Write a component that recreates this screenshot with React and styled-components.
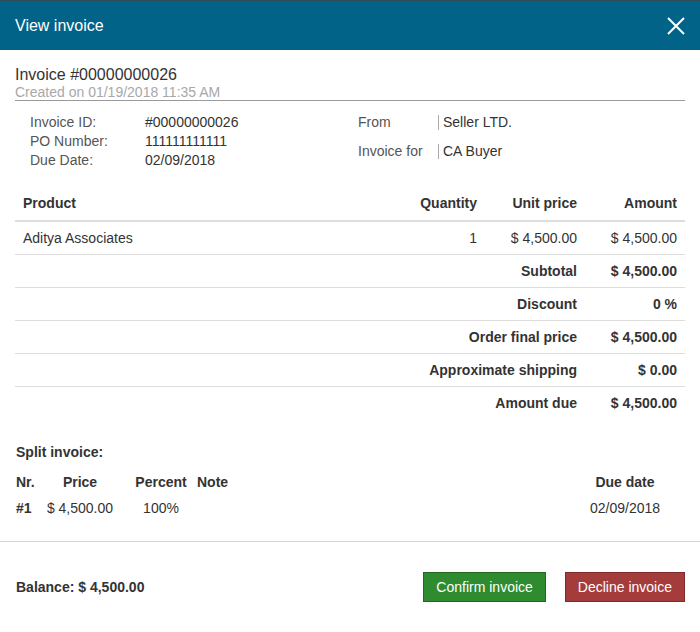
import React from "react";
import styled, { createGlobalStyle } from "styled-components";

const Global = createGlobalStyle`
  html, body { margin: 0; padding: 0; background: #fff; }
  body { font-family: "Liberation Sans", Arial, sans-serif; color: #333; }
  * { box-sizing: border-box; }
`;

const Modal = styled.div`
  width: 700px;
  height: 632px;
  background: #fff;
  display: flex;
  flex-direction: column;
  overflow: hidden;
`;

const Header = styled.div`
  height: 50px;
  flex: none;
  background: #016388;
  border-top: 1px solid #2f4b57;
  display: flex;
  align-items: center;
  justify-content: space-between;
  padding: 0 15px;
`;

const Title = styled.h1`
  margin: 0;
  font-size: 16px;
  font-weight: normal;
  color: #fff;
  line-height: 20px;
`;

const CloseButton = styled.button`
  border: 0;
  background: none;
  padding: 0;
  width: 18px;
  height: 18px;
  display: flex;
  cursor: pointer;
`;

const Body = styled.div`
  padding: 15px 15px 0 15px;
`;

const InvoiceHead = styled.div`
  border-bottom: 1px solid #9a9a9a;
  padding-bottom: 1px;
`;

const InvoiceNumber = styled.div`
  font-size: 16px;
  line-height: 20px;
  color: #333;
`;

const Created = styled.div`
  font-size: 14px;
  line-height: 14px;
  color: #a8a8a8;
`;

const Details = styled.div`
  display: flex;
  padding: 12px 0 0 15px;
`;

const DetailCol = styled.div`
  width: ${(p) => p.$w}px;
  display: flex;
  flex-direction: column;
  gap: ${(p) => p.$gap || 0}px;
`;

const DetailRow = styled.div`
  display: flex;
  font-size: 14px;
  line-height: 19px;
`;

const Label = styled.span`
  width: ${(p) => p.$w}px;
  color: #555;
  flex: none;
`;

const Value = styled.span`
  color: #333;
  ${(p) =>
    p.$bar &&
    `
    padding-left: 5px;
    position: relative;
    &::before {
      content: "";
      position: absolute;
      left: 0;
      top: 2px;
      height: 15px;
      border-left: 1px solid #aaa;
    }
  `}
`;

const Table = styled.div`
  margin-top: 17px;
  display: grid;
  grid-template-columns: 1fr 85px 100px 100px;
  font-size: 14px;
`;

const HeadCell = styled.div`
  padding: 8px;
  line-height: 17px;
  font-weight: bold;
  color: #333;
  border-bottom: 2px solid #ddd;
  text-align: ${(p) => (p.$right ? "right" : "left")};
`;

const Cell = styled.div`
  padding: 8px;
  line-height: 16px;
  border-top: ${(p) => (p.$first ? "0" : "1px solid #ddd")};
  text-align: ${(p) => (p.$right ? "right" : "left")};
  font-weight: ${(p) => (p.$bold ? "bold" : "normal")};
  grid-column: ${(p) => p.$span || "auto"};
  color: #333;
`;

const SplitTitle = styled.div`
  margin-top: 25px;
  font-size: 14px;
  line-height: 16px;
  font-weight: bold;
  padding-left: 1px;
`;

const SplitGrid = styled.div`
  margin-top: 14px;
  padding: 0 15px 0 1px;
  display: grid;
  grid-template-columns: 24px 80px 77px 1fr 90px;
  row-gap: 10px;
  font-size: 14px;
  line-height: 16px;
`;

const SplitCell = styled.div`
  font-weight: ${(p) => (p.$bold ? "bold" : "normal")};
  text-align: ${(p) => p.$align || "left"};
  padding-left: ${(p) => p.$pl || 0}px;
  color: #333;
`;

const Divider = styled.hr`
  margin: 25px 0 0 0;
  border: 0;
  border-top: 1px solid #d4d4d4;
`;

const Footer = styled.div`
  flex: 1;
  display: flex;
  align-items: center;
  justify-content: space-between;
  padding: 0 15px 0 16px;
`;

const Balance = styled.div`
  font-size: 14px;
  font-weight: bold;
  color: #333;
`;

const Actions = styled.div`
  display: flex;
  gap: 19px;
`;

const ActionButton = styled.button`
  height: 30px;
  padding: 0 12px;
  font-family: "Liberation Sans", Arial, sans-serif;
  font-size: 14px;
  color: #fff;
  border: 1px solid ${(p) => (p.$variant === "danger" ? "#7f2a2a" : "#1f6a21")};
  background: ${(p) => (p.$variant === "danger" ? "#a53c3c" : "#2e8b30")};
  border-radius: 0;
  cursor: pointer;
`;

const rows = [
  { label: "Subtotal", value: "$ 4,500.00" },
  { label: "Discount", value: "0 %" },
  { label: "Order final price", value: "$ 4,500.00" },
  { label: "Approximate shipping", value: "$ 0.00" },
  { label: "Amount due", value: "$ 4,500.00" },
];

export default function App() {
  return (
    <>
      <Global />
      <Modal>
        <Header>
          <Title>View invoice</Title>
          <CloseButton aria-label="Close">
            <svg width="18" height="18" viewBox="0 0 18 18">
              <path d="M1 1 L17 17 M17 1 L1 17" stroke="#fff" strokeWidth="2" fill="none" />
            </svg>
          </CloseButton>
        </Header>
        <Body>
          <InvoiceHead>
            <InvoiceNumber>Invoice #00000000026</InvoiceNumber>
            <Created>Created on 01/19/2018 11:35 AM</Created>
          </InvoiceHead>
          <Details>
            <DetailCol $w={328}>
              <DetailRow>
                <Label $w={115}>Invoice ID:</Label>
                <Value>#00000000026</Value>
              </DetailRow>
              <DetailRow>
                <Label $w={115}>PO Number:</Label>
                <Value>111111111111</Value>
              </DetailRow>
              <DetailRow>
                <Label $w={115}>Due Date:</Label>
                <Value>02/09/2018</Value>
              </DetailRow>
            </DetailCol>
            <DetailCol $w={300} $gap={10}>
              <DetailRow>
                <Label $w={80}>From</Label>
                <Value $bar>Seller LTD.</Value>
              </DetailRow>
              <DetailRow>
                <Label $w={80}>Invoice for</Label>
                <Value $bar>CA Buyer</Value>
              </DetailRow>
            </DetailCol>
          </Details>
          <Table>
            <HeadCell>Product</HeadCell>
            <HeadCell $right>Quantity</HeadCell>
            <HeadCell $right>Unit price</HeadCell>
            <HeadCell $right>Amount</HeadCell>
            <Cell $first>Aditya Associates</Cell>
            <Cell $first $right>1</Cell>
            <Cell $first $right>$ 4,500.00</Cell>
            <Cell $first $right>$ 4,500.00</Cell>
            {rows.map((r) => (
              <React.Fragment key={r.label}>
                <Cell $span="1 / 4" $right $bold>{r.label}</Cell>
                <Cell $right $bold>{r.value}</Cell>
              </React.Fragment>
            ))}
          </Table>
          <SplitTitle>Split invoice:</SplitTitle>
          <SplitGrid>
            <SplitCell $bold>Nr.</SplitCell>
            <SplitCell $bold $align="center">Price</SplitCell>
            <SplitCell $bold $align="center" $pl={5}>Percent</SplitCell>
            <SplitCell $bold>Note</SplitCell>
            <SplitCell $bold $align="center">Due date</SplitCell>
            <SplitCell $bold>#1</SplitCell>
            <SplitCell $align="center">$ 4,500.00</SplitCell>
            <SplitCell $align="center" $pl={5}>100%</SplitCell>
            <SplitCell></SplitCell>
            <SplitCell $align="center">02/09/2018</SplitCell>
          </SplitGrid>
        </Body>
        <Divider />
        <Footer>
          <Balance>Balance: $ 4,500.00</Balance>
          <Actions>
            <ActionButton>Confirm invoice</ActionButton>
            <ActionButton $variant="danger">Decline invoice</ActionButton>
          </Actions>
        </Footer>
      </Modal>
    </>
  );
}
